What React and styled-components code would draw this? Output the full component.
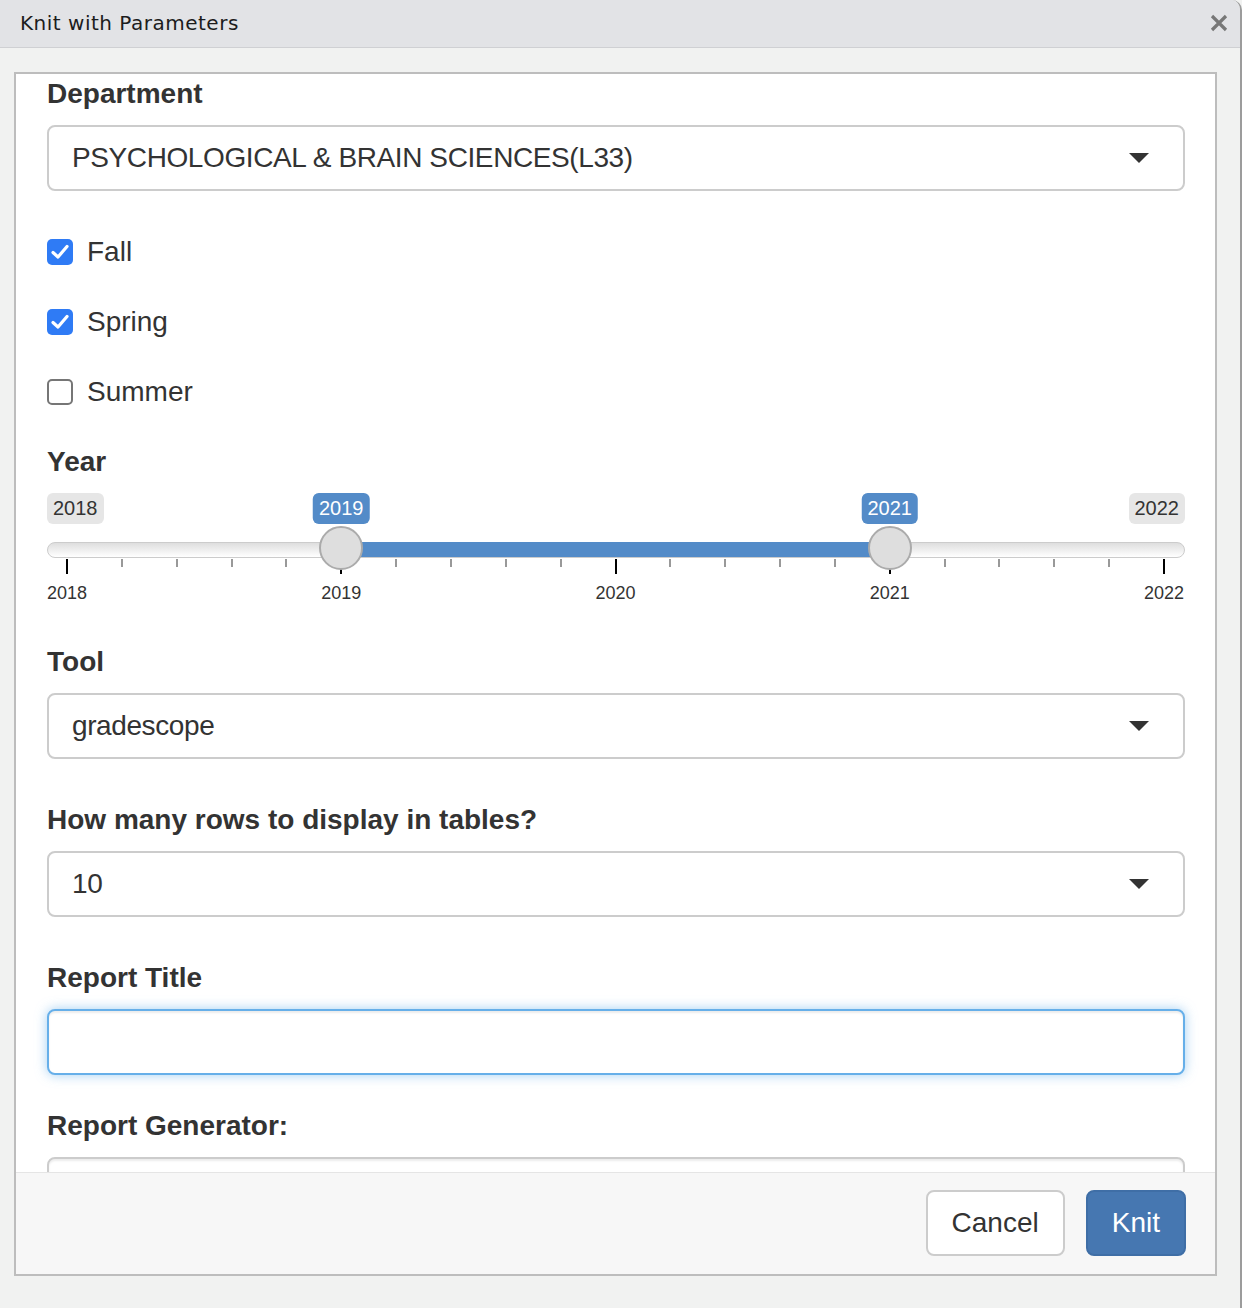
import React, {useState} from 'react';
import styled, {createGlobalStyle} from "styled-components";

const GlobalStyle = createGlobalStyle`
  html, body {
    margin: 0;
    padding: 0;
    background: #f1f2f1;
  }
  * { box-sizing: border-box; }
`;

const Window = styled.div`
  width: 1242px;
  height: 1308px;
  display: flex;
  flex-direction: column;
  background: #f1f2f1;
  border-right: 2px solid #9c9c9c;
  border-top-right-radius: 10px;
  overflow: hidden;
  font-family: "Liberation Sans", Arial, sans-serif;
  color: #333;
`;

const TitleBar = styled.div`
  height: 48px;
  flex: none;
  display: flex;
  align-items: center;
  justify-content: space-between;
  padding: 0 10px 2px 20px;
  background: #e2e3e6;
  border-bottom: 1px solid #cfd0d3;
`;

const Title = styled.div`
  font-family: "DejaVu Sans", sans-serif;
  font-size: 20px;
  letter-spacing: 0.5px;
  color: #1c1c1c;
`;

const CloseButton = styled.button`
  border: none;
  background: none;
  padding: 0;
  width: 22px;
  height: 22px;
  display: flex;
  align-items: center;
  justify-content: center;
  cursor: pointer;
`;

const Frame = styled.div`
  margin: 24px 23px 0 14px;
  height: 1204px;
  border: 2px solid #bdbdbd;
  background: #fff;
  display: flex;
  flex-direction: column;
`;

const Body = styled.div`
  flex: 1;
  overflow: hidden;
  padding: 0 30px 0 31px;
`;

const Footer = styled.div`
  flex: none;
  height: 102px;
  background: #f7f7f7;
  border-top: 1px solid #e5e5e5;
  display: flex;
  align-items: center;
  justify-content: flex-end;
  gap: 21px;
  padding: 0 29px 2px 0;
`;

const Button = styled.button`
  height: 66px;
  padding: 0 24px;
  font-family: "Liberation Sans", Arial, sans-serif;
  font-size: 28px;
  border-radius: 8px;
  cursor: pointer;
  border: 2px solid ${p => (p.primary ? '#3f6ea6' : '#cccccc')};
  background: ${p => (p.primary ? '#4677b1' : '#fff')};
  color: ${p => (p.primary ? '#fff' : '#333')};
`;

const Group = styled.div`
  margin-bottom: ${p => p.gap ?? 41}px;
`;

const Label = styled.div`
  font-size: 28px;
  font-weight: bold;
  line-height: 40px;
  margin-bottom: 11px;
`;

const SelectBox = styled.div`
  height: 66px;
  border: 2px solid #cccccc;
  border-radius: 8px;
  display: flex;
  align-items: center;
  justify-content: space-between;
  padding: 0 34px 0 23px;
  font-size: 28px;
  letter-spacing: -0.4px;
  background: #fff;
`;

const Caret = styled.span`
  width: 0;
  height: 0;
  border-left: 10px solid transparent;
  border-right: 10px solid transparent;
  border-top: 10px solid #333;
`;

const TextInput = styled.input`
  display: block;
  width: 100%;
  height: 66px;
  border-radius: 8px;
  font-size: 28px;
  padding: 0 23px;
  outline: none;
  border: 2px solid ${p => (p.focused ? '#66afe9' : '#cccccc')};
  box-shadow: ${p => (p.focused
    ? 'inset 0 2px 2px rgba(0,0,0,.075), 0 0 12px rgba(102,175,233,.6)'
    : 'inset 0 2px 2px rgba(0,0,0,.075)')};
`;

const CheckList = styled.div`
  display: flex;
  flex-direction: column;
  gap: 30px;
  margin-bottom: 30px;
`;

const CheckRow = styled.label`
  display: flex;
  align-items: center;
  gap: 14px;
  height: 40px;
  font-size: 28px;
  cursor: pointer;
`;

const Box = styled.span`
  width: 26px;
  height: 26px;
  border-radius: 5px;
  display: flex;
  align-items: center;
  justify-content: center;
  background: ${p => (p.checked ? '#2f7bf5' : '#fff')};
  border: ${p => (p.checked ? 'none' : '2px solid #767676')};
`;

/* slider canvas: parts are placed by their value */
const Slider = styled.div`
  position: relative;
  height: 112px;
  margin-bottom: 37px;
`;

const Track = styled.div`
  position: absolute;
  left: 0;
  right: 0;
  top: 49px;
  height: 16px;
  border-radius: 8px;
  border: 1px solid #cccccc;
  background: linear-gradient(to bottom, #dedede, #ffffff);
`;

const Bar = styled.div`
  position: absolute;
  top: 49px;
  height: 15px;
  background: #538bc8;
`;

const Handle = styled.div`
  position: absolute;
  top: 33px;
  width: 44px;
  height: 44px;
  margin-left: -22px;
  border-radius: 50%;
  border: 2px solid #ababab;
  background: #dedede;
`;

const Tag = styled.div`
  position: absolute;
  top: 0;
  height: 31px;
  padding: 0 6px;
  display: flex;
  align-items: center;
  font-size: 20px;
  border-radius: 6px;
  background: ${p => (p.active ? '#538bc8' : '#e6e6e6')};
  color: ${p => (p.active ? '#fff' : '#333')};
  transform: ${p => (p.center ? 'translateX(-50%)' : 'none')};
`;

const Tick = styled.div`
  position: absolute;
  top: 66px;
  width: 2px;
  margin-left: -1px;
  height: ${p => (p.major ? 15 : 8)}px;
  background: ${p => (p.major ? '#000' : '#999')};
`;

const GridLabel = styled.div`
  position: absolute;
  top: 90px;
  font-size: 18px;
  transform: translateX(-50%);
`;

const years = [2018, 2019, 2020, 2021, 2022];
const gridStart = 20;
const gridEnd = 1117;
const pos = y => gridStart + (y - 2018) * (gridEnd - gridStart) / 4;

const RangeSlider = ({from, to}) => {
    const ticks = [];
    for (let i = 0; i <= 20; i++) {
        ticks.push(<Tick key={i} major={i % 5 === 0} style={{left: gridStart + i * (gridEnd - gridStart) / 20}}/>);
    }
    return (
        <Slider>
            <Tag style={{left: 0}}>2018</Tag>
            <Tag style={{right: 0}}>2022</Tag>
            <Tag active center style={{left: pos(from)}}>{from}</Tag>
            <Tag active center style={{left: pos(to)}}>{to}</Tag>
            <Track/>
            <Bar style={{left: pos(from), width: pos(to) - pos(from)}}/>
            {ticks}
            {years.map(y => (
                <GridLabel key={y} style={{left: pos(y)}}>{y}</GridLabel>
            ))}
            <Handle style={{left: pos(from)}}/>
            <Handle style={{left: pos(to)}}/>
        </Slider>
    );
};

const Check = () => (
    <svg width="18" height="16" viewBox="0 0 18 16">
        <path d="M2 8.5 L7 13 L16 2.5" fill="none" stroke="#fff" strokeWidth="3.2" strokeLinecap="round" strokeLinejoin="round"/>
    </svg>
);

const Select = ({value}) => (
    <SelectBox>
        <span>{value}</span>
        <Caret/>
    </SelectBox>
);

const App = () => {
    const [terms, setTerms] = useState({Fall: true, Spring: true, Summer: false});
    return (
        <>
            <GlobalStyle/>
            <Window>
                <TitleBar>
                    <Title>Knit with Parameters</Title>
                    <CloseButton>
                        <svg width="18" height="18" viewBox="0 0 18 18">
                            <path d="M2 2 L16 16 M16 2 L2 16" stroke="#777" strokeWidth="3.2"/>
                        </svg>
                    </CloseButton>
                </TitleBar>
                <Frame>
                    <Body>
                        <Group>
                            <Label>Department</Label>
                            <Select value="PSYCHOLOGICAL & BRAIN SCIENCES(L33)"/>
                        </Group>
                        <CheckList>
                            {Object.keys(terms).map(t => (
                                <CheckRow key={t} onClick={() => setTerms({...terms, [t]: !terms[t]})}>
                                    <Box checked={terms[t] ? 1 : 0}>{terms[t] && <Check/>}</Box>
                                    {t}
                                </CheckRow>
                            ))}
                        </CheckList>
                        <Label>Year</Label>
                        <RangeSlider from={2019} to={2021}/>
                        <Group>
                            <Label>Tool</Label>
                            <Select value="gradescope"/>
                        </Group>
                        <Group>
                            <Label>How many rows to display in tables?</Label>
                            <Select value="10"/>
                        </Group>
                        <Group gap={31}>
                            <Label>Report Title</Label>
                            <TextInput focused/>
                        </Group>
                        <Group>
                            <Label>Report Generator:</Label>
                            <TextInput/>
                        </Group>
                    </Body>
                    <Footer>
                        <Button>Cancel</Button>
                        <Button primary>Knit</Button>
                    </Footer>
                </Frame>
            </Window>
        </>
    );
};

export default App;
